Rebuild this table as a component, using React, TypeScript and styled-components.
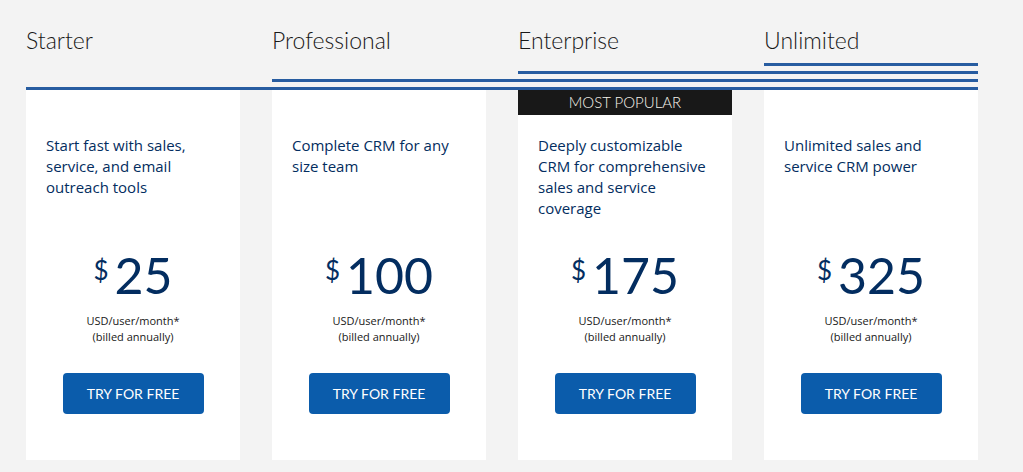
import React from "react";
import styled, { createGlobalStyle } from "styled-components";

const GlobalStyle = createGlobalStyle`
  html, body { margin: 0; padding: 0; background: #f3f3f3; }
  body { font-family: "Open Sans", "Liberation Sans", sans-serif; }
  * { box-sizing: border-box; }
`;

type Plan = {
  name: string;
  desc: string;
  price: string;
  popular?: boolean;
};

const plans: Plan[] = [
  { name: "Starter", desc: "Start fast with sales, service, and email outreach tools", price: "25" },
  { name: "Professional", desc: "Complete CRM for any size team", price: "100" },
  { name: "Enterprise", desc: "Deeply customizable CRM for comprehensive sales and service coverage", price: "175", popular: true },
  { name: "Unlimited", desc: "Unlimited sales and service CRM power", price: "325" },
];

const Page = styled.div`
  width: 1023px;
  height: 472px;
  background: #f3f3f3;
  padding: 26px 0 0 26px;
  overflow: hidden;
`;

const Grid = styled.div`
  display: grid;
  grid-template-columns: repeat(4, 214px);
  column-gap: 32px;
  grid-template-rows: 28px 9px 3px 5px 3px 5px 3px 5px 3px 370px;
`;

const Title = styled.h2<{ $col: number }>`
  grid-column: ${(p) => p.$col};
  grid-row: 1;
  margin: 0;
  font-family: Lato, "Liberation Sans", sans-serif;
  font-weight: 300;
  font-size: 23px;
  line-height: 28px;
  color: #181818;
  white-space: nowrap;
`;

const Rule = styled.div<{ $col: number }>`
  grid-column: ${(p) => p.$col} / -1;
  grid-row: ${(p) => 3 + (4 - p.$col) * 2};
  height: 3px;
  background: #275ca0;
`;

const Card = styled.div<{ $col: number }>`
  grid-column: ${(p) => p.$col};
  grid-row: 10;
  position: relative;
  background: #ffffff;
  display: flex;
  flex-direction: column;
  padding: 45px 20px 0;
`;

const Badge = styled.div`
  position: absolute;
  top: 0;
  left: 0;
  right: 0;
  height: 25px;
  background: #181818;
  color: #f6f3ea;
  font-family: Lato, "Liberation Sans", sans-serif;
  font-weight: 300;
  font-size: 15px;
  line-height: 25px;
  text-align: center;
`;

const Desc = styled.p`
  margin: 0;
  height: 110px;
  font-size: 15px;
  line-height: 21px;
  color: #032d60;
`;

const PriceRow = styled.div`
  display: flex;
  justify-content: center;
  align-items: flex-start;
  gap: 6px;
  color: #032d60;
  font-family: Lato, "Liberation Sans", sans-serif;
  font-weight: 400;
`;

const Currency = styled.span`
  font-size: 26px;
  line-height: 26px;
  margin-top: 12px;
`;

const Amount = styled.span`
  font-size: 50px;
  line-height: 60px;
`;

const Terms = styled.div`
  margin-top: 8px;
  text-align: center;
  font-size: 11px;
  line-height: 16px;
  color: #181818;
`;

const Button = styled.button`
  align-self: center;
  margin-top: 28px;
  width: 141px;
  height: 41px;
  border: none;
  border-radius: 4px;
  background: #0b5cab;
  color: #ffffff;
  font-family: Lato, "Liberation Sans", sans-serif;
  font-size: 14px;
  font-weight: 400;
  cursor: pointer;
`;

export default function App() {
  return (
    <>
      <GlobalStyle />
      <Page>
        <Grid>
          {plans.map((p, i) => (
            <Title key={p.name} $col={i + 1}>{p.name}</Title>
          ))}
          {plans.map((p, i) => (
            <Rule key={p.name + "-rule"} $col={i + 1} />
          ))}
          {plans.map((p, i) => (
            <Card key={p.name + "-card"} $col={i + 1}>
              {p.popular && <Badge>MOST POPULAR</Badge>}
              <Desc>{p.desc}</Desc>
              <PriceRow>
                <Currency>$</Currency>
                <Amount>{p.price}</Amount>
              </PriceRow>
              <Terms>
                USD/user/month*
                <br />
                (billed annually)
              </Terms>
              <Button>TRY FOR FREE</Button>
            </Card>
          ))}
        </Grid>
      </Page>
    </>
  );
}
